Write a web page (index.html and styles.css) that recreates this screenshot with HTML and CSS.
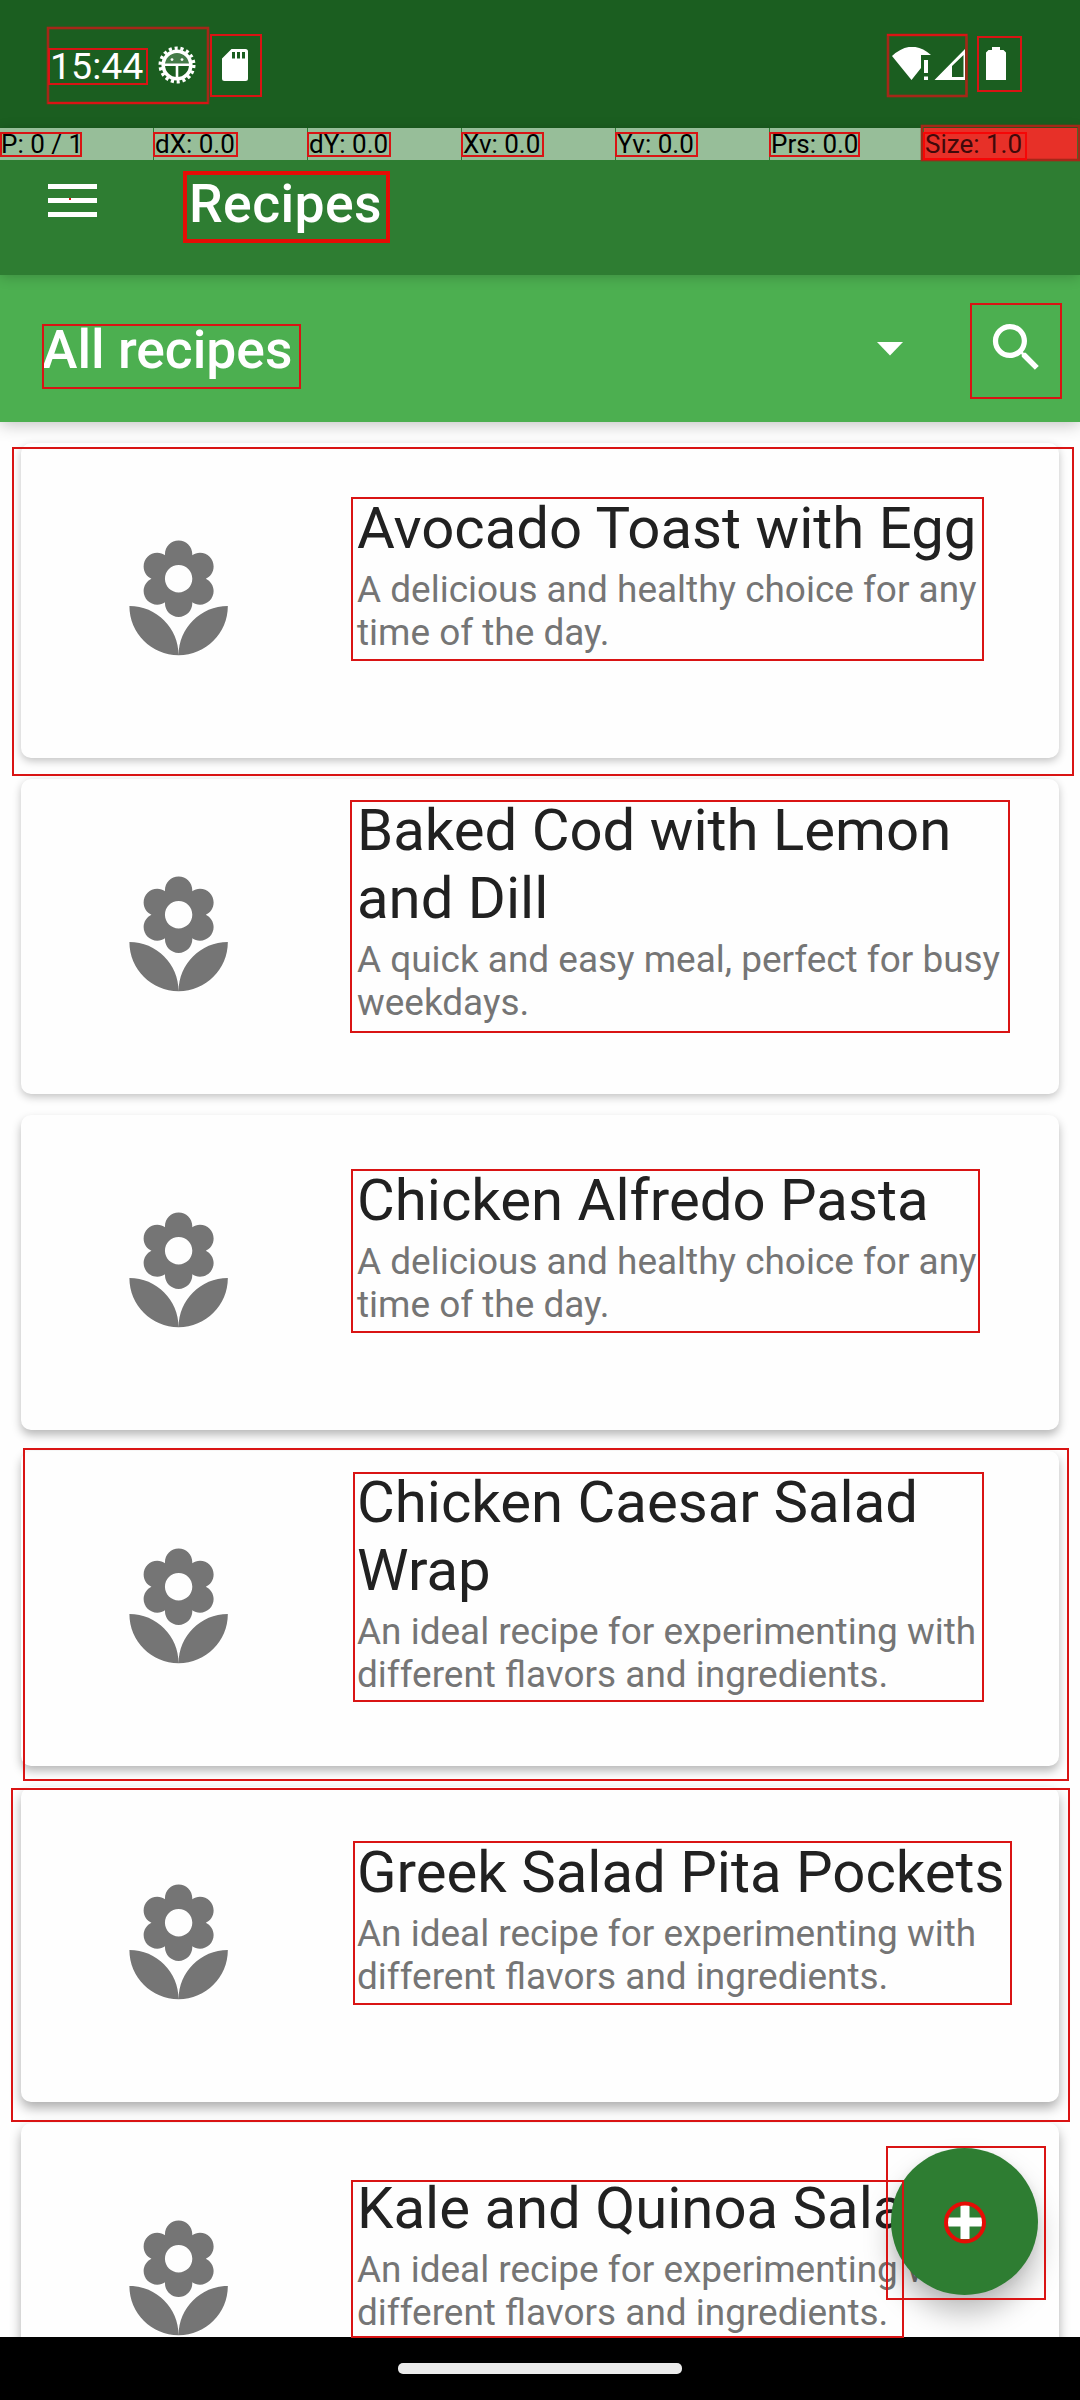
FILE: index.html
```html
<!DOCTYPE html>
<html lang="en">
<head>
<meta charset="utf-8">
<title>Recipes</title>
<link rel="stylesheet" href="styles.css">
</head>
<body>
<svg class="defs" aria-hidden="true">
  <symbol id="florist" viewBox="0 0 24 24"><path d="M12 22c4.97 0 9-4.03 9-9-4.97 0-9 4.03-9 9zM5.6 10.25c0 1.38 1.12 2.5 2.5 2.5.53 0 1.01-.16 1.42-.44l-.02.19c0 1.38 1.12 2.5 2.5 2.5s2.5-1.12 2.5-2.5l-.02-.19c.4.28.89.44 1.42.44 1.38 0 2.5-1.12 2.5-2.5 0-1-.59-1.85-1.43-2.25.84-.4 1.43-1.25 1.43-2.25 0-1.38-1.12-2.5-2.5-2.5-.53 0-1.01.16-1.42.44l.02-.19C14.5 2.12 13.38 1 12 1S9.5 2.12 9.5 3.5l.02.19c-.4-.28-.89-.44-1.42-.44-1.38 0-2.5 1.12-2.5 2.5 0 1 .59 1.85 1.43 2.25-.84.4-1.43 1.25-1.43 2.25zM12 5.5c1.38 0 2.5 1.12 2.5 2.5s-1.12 2.5-2.5 2.5S9.5 9.38 9.5 8s1.12-2.5 2.5-2.5zM3 13c0 4.97 4.03 9 9 9 0-4.97-4.03-9-9-9z"/></symbol>
</svg>
<div class="screen">
  <header class="status">
    <span class="clock">15:44</span>
    <svg class="gear" viewBox="0 0 38 38">
      <circle cx="19" cy="19" r="13.8" fill="none" stroke="#fff" stroke-width="3.6"/>
      <circle cx="19" cy="19" r="16.8" fill="none" stroke="#fff" stroke-width="3.4" stroke-dasharray="3.1 2.765"/>
      <path d="M6 18.8h26M19 19v14" stroke="#fff" stroke-width="2.6"/>
      <path d="M7 18a12 12 0 0 1 24 0z" fill="#fff" fill-opacity=".18"/>
      <circle cx="14" cy="13.6" r="1.4" fill="#fff"/><circle cx="24" cy="13.6" r="1.4" fill="#fff"/>
    </svg>
    <svg class="sd" viewBox="0 0 26 32"><path fill="#fff" fill-rule="evenodd" d="M9.500 0H23.500A2.500 2.500 0 0 1 26 2.500V29.500A2.500 2.500 0 0 1 23.500 32H2.500A2.500 2.500 0 0 1 0 29.500V9.500ZM10 3V9.500H13V3ZM15 3V9.500H18V3ZM20 3V9.500H23V3Z"/></svg>
    <svg class="signal" viewBox="0 0 75 34">
      <path fill="#fff" d="M0 9Q19.500-9 39 8H29V21L19.500 33Z"/>
      <path fill="#fff" d="M32 13h4v13h-4zM32 29.500h4V33h-4z"/>
      <path fill="#fff" fill-rule="evenodd" d="M42.500 33 73 2V33ZM60 19V30H71.500V8Z"/>
    </svg>
    <svg class="battery" viewBox="0 0 20 33"><path fill="#fff" d="M6 0h8v3h3.500L20 5.500V33H0V5.500L2.500 3H6z"/></svg>
  </header>

  <div class="appbar">
    <svg class="menu" viewBox="0 0 49 33"><path fill="#fff" d="M0 0h49v5H0zM0 14h49v5H0zM0 28h49v5H0z"/></svg>
    <h1 class="title">Recipes</h1>
  </div>

  <div class="filter">
    <span class="category">All recipes</span>
    <svg class="arrow" viewBox="0 0 26 14"><path fill="#fff" d="M0 0h26L13 13.500z"/></svg>
    <svg class="search" viewBox="0 0 24 24"><path fill="#fff" d="M15.500 14h-.79l-.28-.27C15.410 12.590 16 11.110 16 9.500 16 5.910 13.090 3 9.500 3S3 5.910 3 9.500 5.910 16 9.500 16c1.610 0 3.090-.59 4.230-1.570l.27.28v.79l5 4.990L20.490 19l-4.990-5zm-6 0C7.010 14 5 11.990 5 9.500S7.010 5 9.500 5 14 7.010 14 9.500 11.990 14 9.500 14z"/></svg>
  </div>

  <main class="list">
    <article class="card e1"><div class="thumb"><svg><use href="#florist"/></svg></div><div class="text"><h2>Avocado Toast with Egg</h2><p>A delicious and healthy choice for any<br>time of the day.</p></div></article>
    <article class="card e1"><div class="thumb"><svg><use href="#florist"/></svg></div><div class="text"><h2>Baked Cod with Lemon<br>and Dill</h2><p>A quick and easy meal, perfect for busy<br>weekdays.</p></div></article>
    <article class="card e2"><div class="thumb"><svg><use href="#florist"/></svg></div><div class="text"><h2>Chicken Alfredo Pasta</h2><p>A delicious and healthy choice for any<br>time of the day.</p></div></article>
    <article class="card e2"><div class="thumb"><svg><use href="#florist"/></svg></div><div class="text"><h2>Chicken Caesar Salad<br>Wrap</h2><p>An ideal recipe for experimenting with<br>different flavors and ingredients.</p></div></article>
    <article class="card e3"><div class="thumb"><svg><use href="#florist"/></svg></div><div class="text"><h2>Greek Salad Pita Pockets</h2><p>An ideal recipe for experimenting with<br>different flavors and ingredients.</p></div></article>
    <article class="card e3"><div class="thumb"><svg><use href="#florist"/></svg></div><div class="text"><h2>Kale and Quinoa Salad</h2><p>An ideal recipe for experimenting with<br>different flavors and ingredients.</p></div></article>
  </main>

  <footer class="nav"><span class="pill"></span></footer>

  <button class="fab" aria-label="Add recipe"><svg viewBox="0 0 34 34"><path fill="#fff" d="M12.500 0h9v12.500H34v9H21.500V34h-9V21.500H0v-9h12.500z"/></svg></button>

  <div class="pointer">
    <span>P: 0 / 1</span><span>dX: 0.0</span><span>dY: 0.0</span><span>Xv: 0.0</span><span>Yv: 0.0</span><span>Prs: 0.0</span><span class="hot">Size: 1.0</span>
  </div>

  <svg class="bounds" viewBox="0 0 1080 2400">
    <rect class="dim" x="48" y="28" width="160" height="75"/>
    <rect class="dim" x="888" y="35" width="78.500" height="61"/>
    <path d="M48 103H208M887 35H967"/>
    <rect x="49" y="49" width="98" height="35"/>
    <rect x="211" y="35" width="50" height="61"/>
    <rect x="978" y="37" width="43" height="54"/>
    <rect x="1" y="133" width="80" height="23"/>
    <rect x="154" y="133" width="83" height="23"/>
    <rect x="308" y="133" width="82" height="23"/>
    <rect x="462" y="133" width="81" height="23"/>
    <rect x="616" y="133" width="81" height="23"/>
    <rect x="770" y="133" width="89" height="23"/>
    <rect class="dim" x="922" y="126" width="157" height="34"/>
    <rect class="bright" x="924" y="133" width="102" height="26"/>
    <rect class="thick" x="185" y="173" width="203" height="68"/>
    <rect x="43" y="325" width="257" height="63"/>
    <rect x="971" y="304" width="90" height="94"/>
    <rect x="13" y="448" width="1060" height="327"/>
    <rect x="352" y="498" width="631" height="162"/>
    <rect x="351" y="801" width="658" height="231"/>
    <rect x="352" y="1170" width="627" height="162"/>
    <rect x="24" y="1449" width="1044" height="331"/>
    <rect x="354" y="1473" width="629" height="228"/>
    <rect x="12" y="1789" width="1057" height="332"/>
    <rect x="354" y="1842" width="657" height="162"/>
    <rect x="352" y="2181" width="551" height="156"/>
    <rect x="887" y="2147" width="158" height="152"/>
    <circle class="thick" cx="965" cy="2222.500" r="19"/>
    <path class="dot" d="M69 198h2v2h-2z"/>
  </svg>
</div>
</body>
</html>
```
FILE: styles.css
```css
* { box-sizing: border-box; margin: 0; padding: 0; }
body { background: #fff; font-family: Roboto, "Liberation Sans", sans-serif; }
svg { display: block; flex: none; }
.defs { position: absolute; width: 0; height: 0; }

.screen {
  position: relative;
  display: flex;
  flex-direction: column;
  width: 1080px;
  height: 2400px;
  overflow: hidden;
  background: #fefefe;
}

.status {
  flex: none;
  display: flex;
  align-items: flex-start;
  height: 128px;
  padding: 46px 74px 0 50px;
  background: #1b5e20;
  color: #fff;
}
.clock { width: 108px; font-size: 37.500px; line-height: 40px; white-space: nowrap; }
.gear { width: 38px; height: 38px; }
.sd { width: 26px; height: 32px; margin: 3px 0 0 26px; }
.signal { width: 75px; height: 34px; margin: 1px 0 0 auto; }
.battery { width: 20px; height: 33px; margin: 1px 0 0 19px; }

.appbar {
  position: relative;
  z-index: 2;
  flex: none;
  display: flex;
  align-items: flex-start;
  height: 147px;
  padding: 44px 48px 0;
  background: #2e7d32;
  box-shadow: 0 2px 12px rgba(0, 0, 0, .2);
}
.menu { width: 49px; height: 33px; margin-top: 12px; }
.title { margin-left: 92px; color: #fff; font-size: 53.500px; font-weight: 500; line-height: 64px; letter-spacing: .4px; }

.filter {
  position: relative;
  z-index: 1;
  flex: none;
  display: flex;
  align-items: flex-start;
  height: 147px;
  padding: 41px 32px 0 42px;
  background: #4caf50;
  color: #fff;
  box-shadow: 0 2px 16px rgba(0, 0, 0, .26);
}
.category { flex: 1; font-size: 53.400px; font-weight: 500; line-height: 68px; }
.arrow { width: 26px; height: 14px; margin: 26px 82px 0 0; }
.search { width: 63px; height: 63px; }

.list {
  flex: 1;
  min-height: 0;
  display: flex;
  flex-direction: column;
  gap: 21px;
  padding: 21px 21px 0;
  overflow: hidden;
}
.card { flex: none; display: flex; height: 315px; border-radius: 10px; background: #fefefe; }
.e1 { box-shadow: 0 3px 8px rgba(0, 0, 0, .24); }
.e2 { box-shadow: 0 5px 10px rgba(0, 0, 0, .28); }
.e3 { box-shadow: 0 6px 12px rgba(0, 0, 0, .32); }
.thumb { display: grid; place-items: center; width: 315px; }
.thumb svg { width: 131.250px; height: 131.250px; fill: #757575; }
.text {
  display: flex;
  flex-direction: column;
  justify-content: center;
  gap: 6px;
  padding: 0 0 54px 21px;
  white-space: nowrap;
}
.text h2 { color: #212121; font-size: 58.100px; font-weight: 400; line-height: 68px; }
.text p { color: #757575; font-size: 36.950px; line-height: 43px; }

.nav { position: relative; z-index: 1; flex: none; height: 63px; padding-top: 26px; background: #000; }
.pill { display: block; width: 284px; height: 11px; margin: 0 auto; border-radius: 5px; background: #ebebeb; }

.fab {
  position: absolute;
  left: 891px;
  top: 2148px;
  display: grid;
  place-items: center;
  width: 147px;
  height: 147px;
  border: 0;
  border-radius: 50%;
  background: #2e7d32;
  box-shadow: 0 18px 28px rgba(0, 0, 0, .26), 0 2px 10px rgba(0, 0, 0, .06);
}
.fab svg { width: 34px; height: 34px; }

.pointer {
  position: absolute;
  z-index: 3;
  top: 128px;
  left: 0;
  display: grid;
  grid-template-columns: repeat(7, 153px);
  column-gap: 1px;
  width: 1080px;
  height: 32px;
  color: #000;
  font-size: 26px;
  line-height: 32px;
}
.pointer span { padding-left: 1px; background: rgba(255, 255, 255, .5); white-space: nowrap; }
.pointer .hot { background: #e73028; color: #40090a; }

.bounds { position: absolute; z-index: 4; inset: 0; width: 1080px; height: 2400px; fill: none; stroke: #d91414; stroke-width: 2; }
.bounds .dim { stroke: #a42818; stroke-width: 2.600; }
.bounds .bright { stroke: #f60606; }
.bounds .thick { stroke: #e50d05; stroke-width: 4; }
.bounds .dot { fill: #d91414; stroke: none; }
```
